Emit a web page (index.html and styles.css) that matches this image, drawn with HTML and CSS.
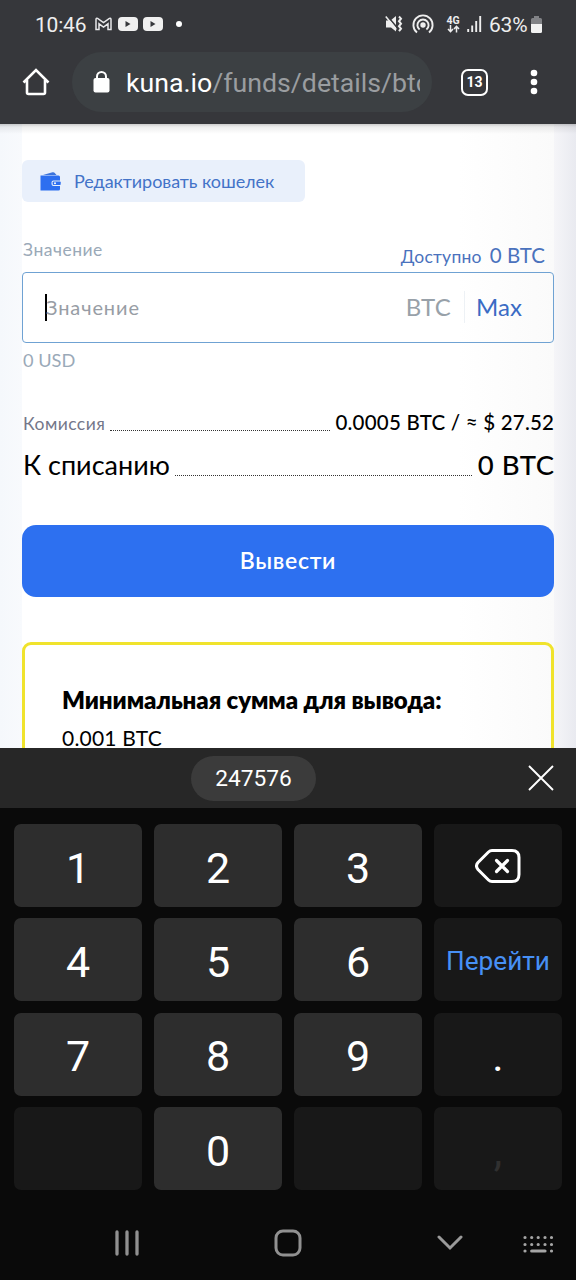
FILE: index.html
```html
<!DOCTYPE html>
<html lang="ru">
<head>
<meta charset="utf-8">
<title>Kuna</title>
<link rel="stylesheet" href="styles.css">
</head>
<body>
<div class="screen">
  <header class="chrome">
    <div class="status">
      <div class="status-left">
        <span class="clock">10:46</span>
        <svg class="ic-mail" width="17" height="14" viewBox="0 0 17 14"><path d="M1 12.500V2.500Q1 .8 2.600 1.400L8.500 5.500l5.900-4.100Q16 .8 16 2.500v10h-3V6.800L8.500 10 4 6.800v5.700z" fill="none" stroke="#e8e8ea" stroke-width="1.500"/></svg>
        <svg class="ic-tube" width="20" height="14" viewBox="0 0 20 14"><rect width="20" height="14" rx="4" fill="#f0f0f0"/><path d="M7.500 4v6l5-3z" fill="#37383c"/></svg>
        <svg class="ic-tube" width="20" height="14" viewBox="0 0 20 14"><rect width="20" height="14" rx="4" fill="#f0f0f0"/><path d="M7.500 4v6l5-3z" fill="#37383c"/></svg>
        <span class="more-dot"></span>
      </div>
      <div class="status-right">
        <svg class="ic-mute" width="18" height="18" viewBox="0 0 18 18"><path d="M1 5.500h4.500L11 1v15.500L6 12.500H1z" fill="#eee"/><path d="M2 .5l10 12" stroke="#37383c" stroke-width="1.500"/><path d="M.8 1.500l10.500 13" stroke="#eee" stroke-width="1.500"/><path d="M14 1.500l2 2.200-2 2.500 2 2.500-2 2.500 2 2.500-2 2.500" fill="none" stroke="#eee" stroke-width="2"/></svg>
        <svg class="ic-cast" width="22" height="20" viewBox="0 0 22 20"><circle cx="11" cy="11" r="2.700" fill="#eee"/><path d="M7.600 15.500a5.600 5.600 0 1 1 6.800 0M5 18.500a9.600 9.600 0 1 1 12 0" fill="none" stroke="#eee" stroke-width="1.900"/></svg>
        <div class="net"><span>4G</span><svg width="13" height="8" viewBox="0 0 13 8"><path d="M3.500 0v6M1 4l2.500 2.700L6 4M9.500 7.500V1.500M7 4l2.500-2.700L12 4" fill="none" stroke="#eee" stroke-width="1.500"/></svg></div>
        <svg class="ic-signal" width="15" height="16" viewBox="0 0 15 16"><path d="M1.200 13v3M5.200 9.500V16M9.200 5v11M13.200 0v16" stroke="#eee" stroke-width="1.900"/></svg>
        <span class="percent">63%</span>
        <svg class="ic-batt" width="11" height="17" viewBox="0 0 11 17"><path d="M3 0h5v2h1.500Q11 2 11 3.500V8H0V3.500Q0 2 1.500 2H3z" fill="#818286"/><path d="M0 8h11v7.500q0 1.500-1.500 1.500h-8Q0 17 0 15.500z" fill="#f2f2f2"/></svg>
      </div>
    </div>
    <div class="toolbar">
      <svg class="ic-home" width="28" height="28" viewBox="0 0 28 28"><path d="M1.500 14.500L14 2l12.500 12.500M5 12v12.500Q5 26 6.500 26h15q1.500 0 1.500-1.500V12" fill="none" stroke="#fff" stroke-width="2.600" stroke-linejoin="miter"/></svg>
      <div class="url">
        <svg width="17" height="22" viewBox="0 0 17 22"><path d="M4 8V5.500a4.500 4.500 0 0 1 9 0V8" fill="none" stroke="#fff" stroke-width="2"/><rect x=".5" y="7" width="16" height="14.500" rx="2" fill="#fff"/></svg>
        <span class="address"><b>kuna.io</b>/funds/details/btc</span>
      </div>
      <span class="tabs">13</span>
      <svg class="ic-menu" width="8" height="26" viewBox="0 0 8 26"><circle cx="4" cy="4" r="3.300" fill="#fff"/><circle cx="4" cy="13" r="3.300" fill="#fff"/><circle cx="4" cy="22" r="3.300" fill="#fff"/></svg>
    </div>
  </header>

  <main class="page">
    <div class="column">
      <a class="edit">
        <svg width="21" height="19" viewBox="0 0 21 19"><path d="M3 3L12.500.3q1.500-.4 2.300.7L16.500 3z" fill="#3c74dc"/><path d="M.5 3.600h18q1.500 0 1.500 1.500v3.400h-6.500q-2 0-2 2v1.500q0 2 2 2H20v3q0 1.500-1.500 1.500h-18z" fill="#2d6ff0"/><rect x="12.700" y="9.500" width="8" height="3.500" rx=".8" fill="#2d6ff0"/><circle cx="15" cy="11.200" r="1" fill="#fff"/></svg>
        <span class="t-edit">Редактировать кошелек</span>
      </a>
      <div class="labels">
        <span class="t-label">Значение</span>
        <span class="avail"><span class="t-avail">Доступно</span><span class="t-zero">0 BTC</span></span>
      </div>
      <div class="field">
        <i class="caret"></i>
        <span class="t-placeholder">Значение</span>
        <span class="t-unit">BTC</span>
        <span class="t-max">Max</span>
      </div>
      <div class="usd"><span>0 USD</span></div>
      <div class="row fee"><span class="t-fee">Комиссия</span><i class="leader"></i><span class="t-feeval">0.0005 BTC / ≈ $ 27.52</span></div>
      <div class="row total"><span class="t-total">К списанию</span><i class="leader"></i><span class="t-totalval">0 BTC</span></div>
      <div class="submit"><span>Вывести</span></div>
      <section class="notice">
        <div class="t-title">Минимальная сумма для вывода:</div>
        <div class="t-min">0.001 BTC</div>
      </section>
    </div>
  </main>

  <section class="keyboard">
    <div class="suggest">
      <span class="chip">247576</span>
      <svg width="26" height="26" viewBox="0 0 26 26"><path d="M1 1l24 24M25 1L1 25" stroke="#fff" stroke-width="1.900"/></svg>
    </div>
    <div class="keys">
      <span class="key">1</span><span class="key">2</span><span class="key">3</span>
      <span class="key dark"><svg width="46" height="36" viewBox="0 0 46 36"><path d="M17 2.500h20q7 0 7 7v17q0 7-7 7H17q-2 0-3.500-1.500L3 21.500q-3-3.500 0-7L13.500 4Q15 2.500 17 2.500z" fill="none" stroke="#fff" stroke-width="3"/><path d="M21.500 12.500l11 11M32.500 12.500l-11 11" stroke="#fff" stroke-width="3.200" stroke-linecap="round"/></svg></span>
      <span class="key">4</span><span class="key">5</span><span class="key">6</span><span class="key dark go">Перейти</span>
      <span class="key">7</span><span class="key">8</span><span class="key">9</span><span class="key dark">.</span>
      <span class="key dark"></span><span class="key">0</span><span class="key dark"></span><span class="key dark faint">,</span>
    </div>
    <nav class="nav">
      <svg class="n-recent" width="26" height="26" viewBox="0 0 26 26"><path d="M3 2v22M13 2v22M23 2v22" stroke="#919191" stroke-width="3.300" stroke-linecap="round"/></svg>
      <svg class="n-home" width="28" height="28" viewBox="0 0 28 28"><rect x="2" y="2" width="24" height="24" rx="7" fill="none" stroke="#919191" stroke-width="3"/></svg>
      <svg class="n-down" width="26" height="16" viewBox="0 0 26 16"><path d="M2 2l11 11L24 2" fill="none" stroke="#9a9a9a" stroke-width="3" stroke-linecap="round"/></svg>
      <svg class="n-kbd" width="31" height="19" viewBox="0 0 31 19"><path d="M2 2.500h.01M8.700 2.500h.01M15.200 2.500h.01M22 2.500h.01M28.500 2.500h.01M2 9.500h.01M8.700 9.500h.01M15.200 9.500h.01M22 9.500h.01M28.500 9.500h.01M2 16h.01M8.700 16h13.300M28.500 16h.01" stroke="#a5a5a5" stroke-width="3.200" stroke-linecap="round"/></svg>
    </nav>
  </section>
</div>
</body>
</html>
```
FILE: styles.css
```css
* { box-sizing: border-box; }
body { margin: 0; background: #0a0a0a; font-family: Lato, "Noto Sans", sans-serif; }
svg { display: block; flex: none; }
span { white-space: nowrap; }
.screen { width: 576px; height: 1280px; display: flex; flex-direction: column; overflow: hidden; }

.chrome { height: 124px; flex: none; background: #36373b; font-family: Roboto, sans-serif; color: #eee; }
.status { height: 48px; padding: 0 34px 0 35px; display: flex; justify-content: space-between; align-items: center; }
.status-left, .status-right { display: flex; align-items: center; }
.clock { font-size: 21px; line-height: 48px; letter-spacing: -0.2px; padding-top: 1px; width: 60px; }
.ic-tube { margin-left: 5px; }
.ic-mail + .ic-tube { margin-left: 6px; }
.more-dot { width: 6px; height: 6px; border-radius: 50%; background: #fff; margin-left: 13px; }
.ic-cast { margin-left: 9px; }
.net { width: 14px; margin-left: 12px; display: flex; flex-direction: column; align-items: center; font-size: 10.500px; line-height: 9px; font-weight: 700; }
.ic-signal { margin-left: 7px; }
.percent { font-size: 21px; letter-spacing: -0.2px; margin-left: 7px; width: 40px; padding-top: 1px; }
.ic-batt { margin-left: 2px; }

.toolbar { height: 76px; padding: 4px 38px 12px 22px; display: flex; align-items: center; }
.url { width: 360px; height: 60px; margin-left: 22px; border-radius: 30px; background: #3c4043; display: flex; align-items: center; padding: 0 11px 0 21px; }
.address { margin-left: 16px; width: 294px; overflow: hidden; font-size: 26.700px; line-height: 40px; color: #9a9da0; padding-top: 1px; }
.address b { font-weight: 400; color: #fff; }
.tabs { width: 27px; height: 27px; margin-left: 29px; border: 2.600px solid #fff; border-radius: 7px; font-size: 14px; line-height: 23px; font-weight: 700; text-align: center; color: #fff; }
.ic-menu { margin-left: 42px; }

.page { height: 624px; flex: none; overflow: hidden; padding: 0 22px 0 22px; background: linear-gradient(#0003, #0001 3px, #0000 10px), linear-gradient(90deg, #f5f8fc 0, #f8fafd 22px, #f5f5f8 554px, #e9eaf0 576px); }
.column { height: 100%; padding-top: 36px; background: linear-gradient(#0003, #0001 3px, #0000 10px), linear-gradient(90deg, #fff 82%, #fafafa); }
.edit { width: 283px; height: 42px; border-radius: 6px; background: #e9f0fb; display: flex; align-items: center; padding-left: 18px; }
.t-edit { margin-left: 13px; font-size: 18px; letter-spacing: -0.07px; color: #4373c8; padding-bottom: 1px; }
.labels { height: 70px; display: flex; justify-content: space-between; align-items: flex-start; }
.t-label { margin-top: 37px; padding-left: 1px; font-size: 17.500px; letter-spacing: .5px; line-height: 22px; color: #9aa9b8; }
.avail { display: flex; align-items: baseline; margin-top: 41px; padding-right: 9px; line-height: 24px; color: #4a72bd; }
.t-avail { font-size: 17.500px; letter-spacing: .25px; }
.t-zero { font-size: 20.500px; margin-left: 8px; }
.field { height: 71px; border: 1.500px solid #6fa2d3; border-radius: 4px; display: flex; align-items: center; padding: 0 31px 0 22px; }
.caret { width: 2px; height: 27px; background: #000; }
.t-placeholder { font-size: 20px; letter-spacing: .9px; color: #989da5; margin-right: auto; margin-left: -1px; padding-bottom: 2px; }
.t-unit { font-size: 24px; letter-spacing: .2px; color: #98a1a9; padding-right: 13px; border-right: 1px solid #edf1f5; line-height: 32px; margin-bottom: 2px; }
.t-max { font-size: 24px; letter-spacing: .1px; color: #3a6bc4; margin-left: 11px; padding-bottom: 2px; }
.usd { height: 61px; padding: 5px 0 0 1px; font-size: 18.200px; line-height: 24px; color: #9aa9b8; }
.row { display: flex; align-items: baseline; }
.leader { flex: 1; border-bottom: 1px dotted #333; position: relative; top: 1px; }
.fee { height: 42px; line-height: 36px; padding-left: 1px; }
.fee .leader { margin: 0 5px; }
.total { height: 79px; line-height: 38px; padding-left: 1px; }
.total .leader { margin: 0 6px 0 5px; }
.t-fee { font-size: 17.500px; letter-spacing: .45px; color: #74778a; }
.t-feeval { font-size: 20.500px; letter-spacing: .22px; margin-right: -.2px; font-weight: 500; color: #000; }
.t-total { font-size: 27px; }
.t-totalval { font-size: 27.500px; letter-spacing: .5px; margin-right: -.5px; font-weight: 500; }
.submit { height: 72px; border-radius: 14px; background: #2d70f0; color: #fff; display: flex; align-items: center; justify-content: center; font-size: 23px; letter-spacing: .7px; font-weight: 600; padding-bottom: 2px; }
.notice { height: 180px; margin-top: 45px; border: 3px solid #f0e32c; border-radius: 9px; padding: 38px 37px; color: #000; }
.t-title { font-size: 24px; line-height: 34px; letter-spacing: -.08px; font-weight: 800; white-space: nowrap; }
.t-min { font-size: 21px; line-height: 28px; margin-top: 7px; letter-spacing: .2px; }

.keyboard { font-family: Roboto, sans-serif; color: #fff; background: #0a0a0a; flex: 1; }
.suggest { height: 60px; background: #272727; display: flex; align-items: center; justify-content: space-between; padding: 0 22px 0 191px; }
.chip { width: 125px; height: 45px; border-radius: 23px; background: #3b3b3b; font-size: 22.700px; line-height: 46px; text-align: center; }
.keys { display: grid; grid-template-columns: repeat(4, 128px); grid-auto-rows: 83px; gap: 11.400px 12px; padding: 16px 14px 0; }
.key { background: #2d2d2d; border-radius: 7px; font-size: 43px; line-height: 50px; padding-top: 4px; display: flex; justify-content: center; align-items: center; }
.dark { background: #181818; }
.key:nth-child(4) { padding-top: 0; }
.go { font-size: 26.200px; color: #4790f5; padding-top: 2px; }
.faint { color: #303030; }
.nav { height: 90px; display: flex; align-items: center; padding: 15px 22px 0 114px; }
.n-home { margin-left: 134px; }
.n-down { margin-left: 135px; }
.n-kbd { margin-left: 60px; margin-top: 3px; }
```
